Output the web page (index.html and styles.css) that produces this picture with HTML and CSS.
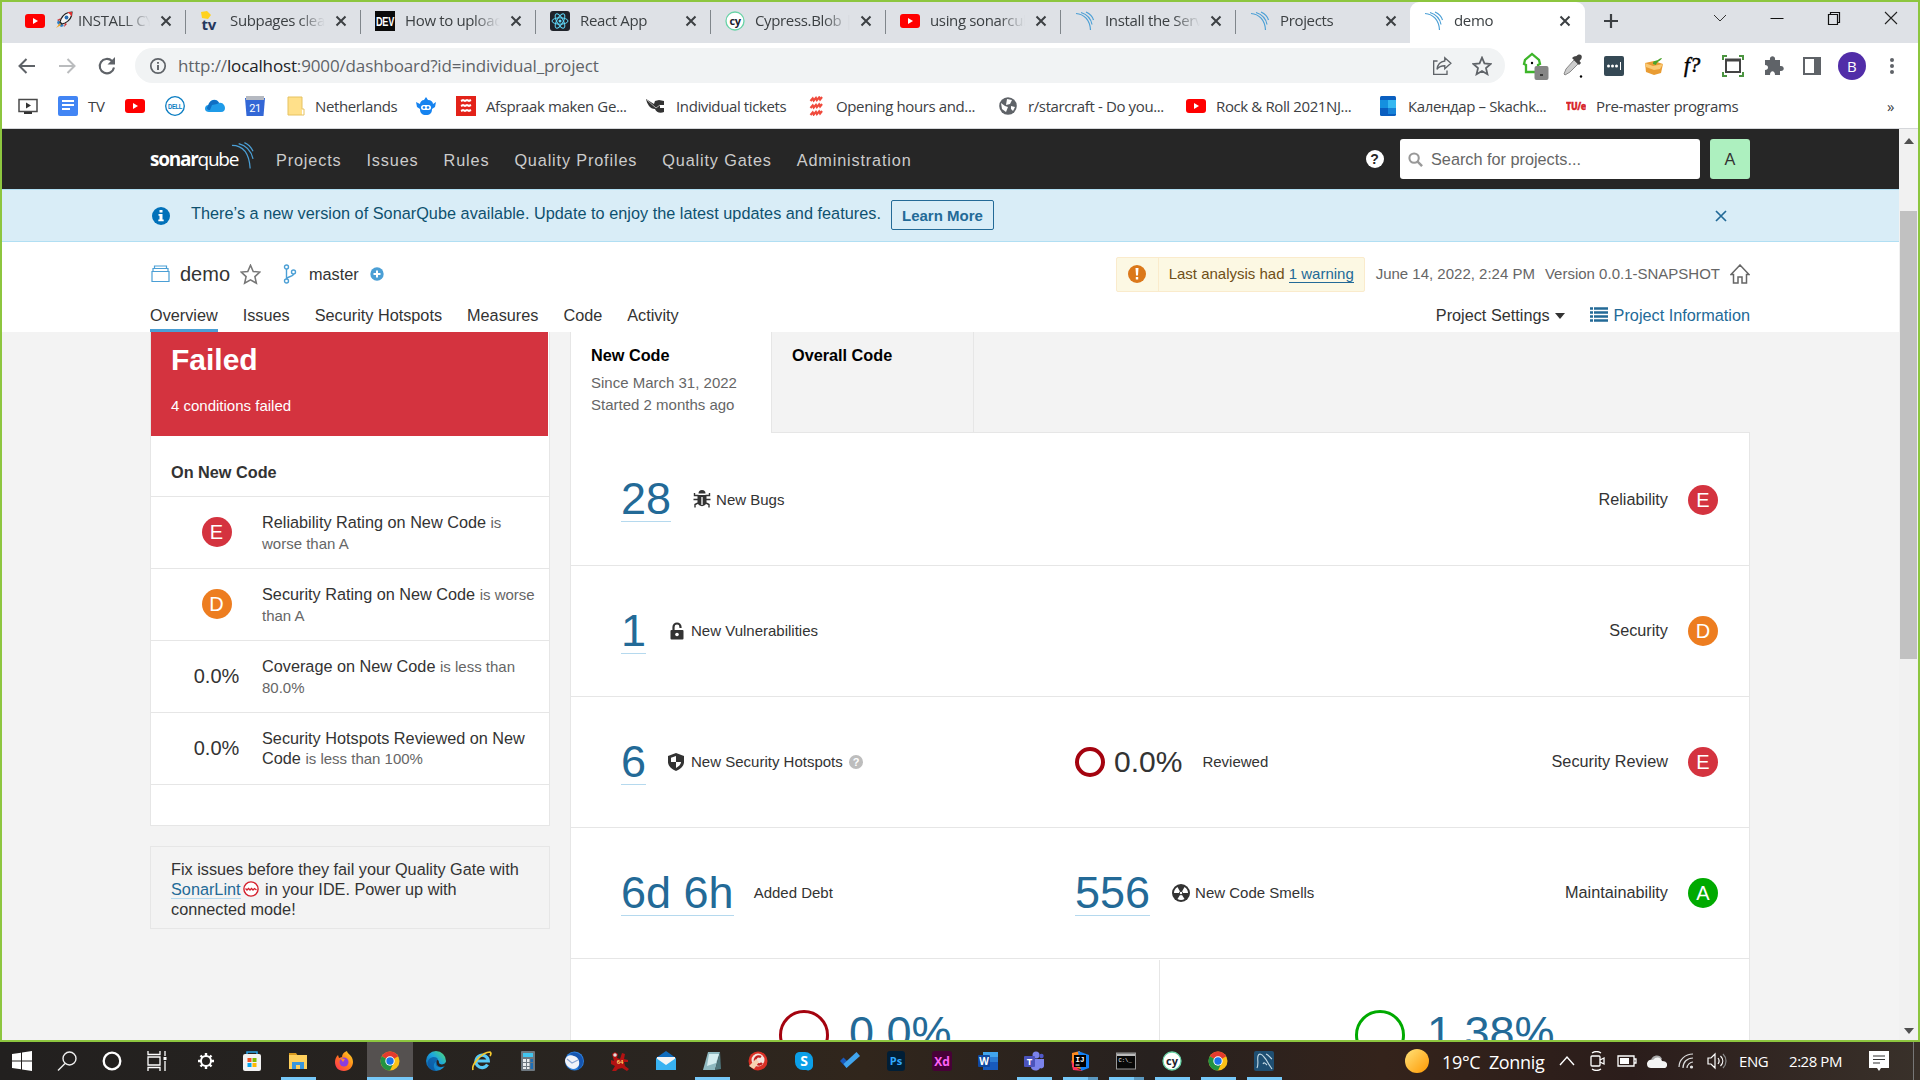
FILE: index.html
```html
<!DOCTYPE html>
<html lang="en">
<head>
<meta charset="utf-8">
<title>demo</title>
<link rel="stylesheet" href="styles.css">
</head>
<body>
<svg class="defs" width="0" height="0">
  <defs>
    <linearGradient id="gsun" x1="0" y1="0" x2="1" y2="1"><stop offset="0" stop-color="#ffe27a"/><stop offset="1" stop-color="#ff9800"/></linearGradient>
    <linearGradient id="gfire" x1="0" y1="1" x2="1" y2="0"><stop offset="0" stop-color="#ff2a5f"/><stop offset=".5" stop-color="#ff7a1a"/><stop offset="1" stop-color="#ffe226"/></linearGradient>
    <linearGradient id="gedge" x1="0" y1="1" x2="1" y2="0"><stop offset="0" stop-color="#0c59a4"/><stop offset=".55" stop-color="#1ba4e0"/><stop offset="1" stop-color="#55e06b"/></linearGradient>
    <symbol id="yt" viewBox="0 0 20 20"><rect y="3" width="20" height="14" rx="3" fill="#f00"/><path d="M8 7l5 3-5 3z" fill="#fff"/></symbol>
    <symbol id="arcs" viewBox="0 0 20 20"><path d="M1 2.500C9 3 15 9 15.500 19M6 1.500c6 2 10 6 11 12M11 1c4 1.800 6.500 4.500 7.500 8" fill="none" stroke="#4b9fd5" stroke-width="1.200"/></symbol>
    <symbol id="close" viewBox="0 0 20 20"><path d="M5.500 5.500l9 9m0-9l-9 9" stroke="#3c4043" stroke-width="2" fill="none"/></symbol>
    <symbol id="chrome" viewBox="0 0 20 20"><circle cx="10" cy="10" r="9.500" fill="#fbc116"/><path d="M10 10L1.770 5.250A9.500 9.500 0 0 1 18.230 5.250z" fill="#e33b2e"/><path d="M10 10L1.770 5.250A9.500 9.500 0 0 0 10 19.500L13.500 12z" fill="#229342"/><circle cx="10" cy="10" r="4.700" fill="#fff"/><circle cx="10" cy="10" r="3.700" fill="#1a73e8"/></symbol>
    <symbol id="cy" viewBox="0 0 20 20"><circle cx="10" cy="10" r="9" fill="#fff" stroke="#69d3a7" stroke-width="1.300"/><text x="10" y="13.500" text-anchor="middle" font-size="11" font-weight="700" fill="#1b1e2e" font-family="Open Sans">cy</text></symbol>
  </defs>
</svg>
<div class="screen">
<div class="browser">
  <div class="tabstrip">
    <div class="tab"><svg class="ic"><use href="#yt"/></svg><span class="title"><svg class="rocket" viewBox="0 0 18 18"><path d="M2 12l4 4 3-1-6-6z" fill="#2f80c8"/><path d="M6 8C8 4 12 1 17 1c0 5-3 9-7 11l-3 1-2-2z" fill="#f4f4f4" stroke="#222" stroke-width="1.200"/><path d="M12.500 1H17v4.500z" fill="#d33"/><circle cx="11.500" cy="6.500" r="1.900" fill="#276cb0"/><path d="M5 12l-4 5 5-3z" fill="#f6a21d"/><path d="M6 7L2 9l2 1zM10 12l-1 4 3-3z" fill="#c92f2f"/></svg>INSTALL CYP</span><svg class="ic x"><use href="#close"/></svg></div>
    <div class="tab"><svg class="ic" viewBox="0 0 20 20"><path d="M1 1l6-1 4 4-3 4-6-1z" fill="#ffd21f"/><text x="1.500" y="19" font-size="15" font-weight="700" fill="#24375d" font-family="Open Sans">tv</text></svg><span class="title">Subpages clean</span><svg class="ic x"><use href="#close"/></svg></div>
    <div class="tab"><svg class="ic" viewBox="0 0 20 20"><rect width="20" height="20" fill="#0a0a0a"/><text x="10" y="14.500" textLength="18" lengthAdjust="spacingAndGlyphs" text-anchor="middle" font-size="12" font-weight="700" fill="#fff" font-family="Liberation Sans">DEV</text></svg><span class="title">How to upload</span><svg class="ic x"><use href="#close"/></svg></div>
    <div class="tab"><svg class="ic" viewBox="0 0 20 20"><rect width="20" height="20" rx="3" fill="#20232a"/><g fill="none" stroke="#61dafb" stroke-width="1"><ellipse cx="10" cy="10" rx="8" ry="3.200"/><ellipse cx="10" cy="10" rx="8" ry="3.200" transform="rotate(60 10 10)"/><ellipse cx="10" cy="10" rx="8" ry="3.200" transform="rotate(120 10 10)"/></g><circle cx="10" cy="10" r="1.500" fill="#61dafb"/></svg><span class="title">React App</span><svg class="ic x"><use href="#close"/></svg></div>
    <div class="tab"><svg class="ic"><use href="#cy"/></svg><span class="title">Cypress.Blob |</span><svg class="ic x"><use href="#close"/></svg></div>
    <div class="tab"><svg class="ic"><use href="#yt"/></svg><span class="title">using sonarcube</span><svg class="ic x"><use href="#close"/></svg></div>
    <div class="tab"><svg class="ic"><use href="#arcs"/></svg><span class="title">Install the Serve</span><svg class="ic x"><use href="#close"/></svg></div>
    <div class="tab last"><svg class="ic"><use href="#arcs"/></svg><span class="title">Projects</span><svg class="ic x"><use href="#close"/></svg></div>
    <div class="tab active"><svg class="ic"><use href="#arcs"/></svg><span class="title">demo</span><svg class="ic x"><use href="#close"/></svg></div>
    <svg class="plus" viewBox="0 0 16 16"><path d="M8 1v14M1 8h14" stroke="#3c4043" stroke-width="2.200"/></svg>
    <div class="winctl">
      <svg viewBox="0 0 16 16"><path d="M2 5l6 6 6-6" fill="none" stroke="#333" stroke-width="1"/></svg>
      <svg viewBox="0 0 16 16"><path d="M1.500 8.500h13" stroke="#111"/></svg>
      <svg viewBox="0 0 16 16"><path d="M2.500 4.500h9v10h-9zM4.500 4.500v-2h9v10h-2" fill="none" stroke="#111" stroke-width="1.200"/></svg>
      <svg viewBox="0 0 16 16"><path d="M2 2l12 12M14 2L2 14" stroke="#222" stroke-width="1.100"/></svg>
    </div>
  </div>
  <div class="toolbar">
    <svg class="nv" viewBox="0 0 20 20"><path d="M18 10H3M9.500 3L2.500 10l7 7" fill="none" stroke="#5f6368" stroke-width="2"/></svg>
    <svg class="nv" viewBox="0 0 20 20"><path d="M2 10h15M10.500 3l7 7-7 7" fill="none" stroke="#babcbe" stroke-width="2"/></svg>
    <svg class="nv" viewBox="0 0 20 20"><path d="M17 11.500A7.200 7.200 0 1 1 15 5" fill="none" stroke="#5f6368" stroke-width="2.100"/><path d="M18 1v7.500h-7.500z" fill="#5f6368"/></svg>
    <div class="omnibox">
      <svg viewBox="0 0 18 18"><circle cx="9" cy="9" r="7.200" fill="none" stroke="#5f6368" stroke-width="1.700"/><path d="M9 8v5M9 5v1.800" stroke="#5f6368" stroke-width="1.900"/></svg>
      <span class="url">http://<b>localhost</b>:9000/dashboard?id=individual_project</span>
      <svg viewBox="0 0 18 18"><path d="M5 4.500H1.500v12h12V13" fill="none" stroke="#5f6368" stroke-width="1.200"/><path d="M11.500 1.500l5.500 5-5.500 5V8.800C8 8.800 6 9.800 4.500 12 5 8 7.500 5 11.500 4.500z" fill="none" stroke="#5f6368" stroke-width="1.200"/></svg>
      <svg viewBox="0 0 18 18"><path d="M9 1.500l2.200 5.200 5.600.5-4.200 3.700 1.300 5.500L9 13.500l-4.900 2.900 1.300-5.500L1.200 7.200l5.600-.5z" fill="none" stroke="#5f6368" stroke-width="1.600"/></svg>
    </div>
    <div class="exts">
      <svg viewBox="0 0 28 28"><path d="M3 12l1-4 7-6 7 6 1 4-2 1v7H5v-7z" fill="#fff" stroke="#3db52a" stroke-width="2.300"/><circle cx="11" cy="11" r="1.200"/><rect x="13.500" y="14" width="14" height="14" rx="2" fill="#858585"/><path d="M19 23h3" stroke="#222" stroke-width="1.500"/></svg>
      <svg viewBox="0 0 28 28"><path d="M3 22l2-5 8-9 4 4-8 8-5 3z" fill="#ccc" stroke="#888"/><path d="M11 6l7 7 2-2-1.500-2c5-4 1-9-3-5L13 4.500z" fill="#444"/><circle cx="20" cy="24.500" r="1.200"/></svg>
      <svg viewBox="0 0 28 28"><rect x="4" y="4" width="20" height="20" rx="2" fill="#354955"/><g fill="#fff"><circle cx="8.500" cy="14" r="1.500"/><circle cx="12.500" cy="14" r="1.500"/><circle cx="16.500" cy="14" r="1.500"/><path d="M20 10h1v8h-1z"/></g></svg>
      <svg viewBox="0 0 28 28"><path d="M5 11l9-2 9 3-2 9-7 2-8-3z" fill="#e99c33"/><path d="M5 11l8 3 10-2-3 5-6 1-8-3z" fill="#fac974"/><path d="M13 12c0-4 3-3 5-4 1-1 2-2 4-2-1 3-5 3-6 7z" fill="#4ba42c"/></svg>
      <svg viewBox="0 0 28 28"><text x="5" y="20" font-size="21" font-style="italic" font-family="Liberation Serif" stroke="#000" stroke-width=".5">f?</text></svg>
      <svg viewBox="0 0 28 28"><rect x="7" y="8" width="14" height="12" fill="none" stroke="#444" stroke-width="2"/><path d="M6 8h16" stroke="#444" stroke-width="3"/><path d="M4 8V4h4M20 4h4v4M24 20v4h-4M8 24H4v-4" fill="none" stroke="#4b9440" stroke-width="2"/></svg>
      <svg viewBox="0 0 28 28"><path d="M6 8h5c-1-5 6-5 5 0h5v6c5-1 5 6 0 5v4h-5c0-5-5-5-5 0H6v-5c4 0 4-5 0-5z" fill="#5f6368"/></svg>
      <svg viewBox="0 0 28 28"><rect x="6" y="6" width="16" height="16" fill="none" stroke="#5f6368" stroke-width="2"/><path d="M16 5h7v18h-7z" fill="#5f6368"/></svg>
      <span class="me">B</span>
      <svg viewBox="0 0 28 28" fill="#5f6368"><circle cx="14" cy="8" r="2"/><circle cx="14" cy="14" r="2"/><circle cx="14" cy="20" r="2"/></svg>
    </div>
  </div>
  <div class="bookmarks">
    <a><svg class="ic" viewBox="0 0 20 20"><path d="M1 3.500h18v12H1z" fill="#fff" stroke="#4a4a4a" stroke-width="1.500"/><path d="M8 6.500l5 3-5 3zM6 16h8v2H6z" fill="#333"/></svg></a>
    <a><svg class="ic" viewBox="0 0 20 20"><rect width="20" height="20" rx="2" fill="#4285f4"/><path d="M4 5h12M4 9h12M4 13h8" stroke="#fff" stroke-width="2"/></svg>TV</a>
    <a><svg class="ic"><use href="#yt"/></svg></a>
    <a><svg class="ic" viewBox="0 0 20 20"><circle cx="10" cy="10" r="9.300" fill="#fff" stroke="#0a7dc2" stroke-width="1.300"/><text x="10" y="12.500" textLength="14" lengthAdjust="spacingAndGlyphs" text-anchor="middle" font-size="6.500" font-weight="700" fill="#0a7dc2" font-family="Liberation Sans">DELL</text></svg></a>
    <a><svg class="ic" viewBox="0 0 20 20"><path d="M0 13c0-4 3-4 4-4 1-6 8-7 10-2 4-1 6 3 6 5s-1 4-4 4H4c-2 0-4-1-4-3z" fill="#1f9be8"/><path d="M3 10c1-7 9-8 11-3l-2 1-5 1-2 5c-3 0-4-2-2-4z" fill="#0f6fc4"/></svg></a>
    <a><svg class="ic" viewBox="0 0 20 20"><path d="M0 2h20l-1.500 18h-17z" fill="#3367d6"/><path d="M1 0h18v4H1z" fill="#b5b9c1"/><text x="10" y="15.500" text-anchor="middle" font-size="11" fill="#fff" font-family="Roboto">21</text></svg></a>
    <a><svg class="ic" viewBox="0 0 20 20"><path d="M3 1h14v18H3z" fill="#ffe08a"/><path d="M3 1h14v12h2v6H3z" fill="none" stroke="#e6c260"/></svg>Netherlands</a>
    <a><svg class="ic" viewBox="0 0 20 20"><path d="M10 1l2 3c3 0 5 2 5 4l3-2-1 5-3 2c0 4-2 6-6 6s-6-2-6-6l-3-2-1-5 4 2c0-2 2-4 4-4z" fill="#1683f0"/><rect x="5" y="9" width="10" height="5" rx="2.500" fill="#fff"/><circle cx="8" cy="11.500" r="1.300" fill="#1683f0"/><circle cx="12" cy="11.500" r="1.300" fill="#1683f0"/></svg></a>
    <a><svg class="ic" viewBox="0 0 20 20"><rect width="20" height="20" fill="#e32219"/><path d="M5 5l2-1 2 1 2-1 2 1 2-1M5 10l2-1 2 1 2-1 2 1 2-1M5 15l2-1 2 1 2-1 2 1 2-1" stroke="#fff" stroke-width="2" fill="none"/></svg>Afspraak maken Ge...</a>
    <a><svg class="ic" viewBox="0 0 20 20"><path d="M0 3l8 5 1-3 4-1 5 1v4h-4v3h4v4c-4 2-8 0-9-3-5 0-8-5-9-10z" fill="#333"/><path d="M1 4l9 8 4-3" stroke="#aaa" fill="none"/></svg>Individual tickets</a>
    <a><svg class="ic" viewBox="0 0 20 20"><path d="M4.500 5l2.200-2.500 1 2 2.200-2.500 1 2 2.200-2.500 1 2 1.900-2.500M4.500 12l2.200-2.500 1 2 2.200-2.500 1 2 2.200-2.500 1 2 1.900-2.500M4.500 19l2.200-2.500 1 2 2.200-2.500 1 2 2.200-2.500 1 2 1.900-2.500" fill="none" stroke="#f04a3c" stroke-width="2.200"/></svg>Opening hours and...</a>
    <a><svg class="ic" viewBox="0 0 20 20"><circle cx="10" cy="10" r="8.800" fill="#5f6368"/><path d="M3 7l4 3 3 1-2 5-4-3zM9 3l5 1-2 4-4 1zM13 10l4 1-2 4-2-2z" fill="#fff"/></svg>r/starcraft - Do you...</a>
    <a><svg class="ic"><use href="#yt"/></svg>Rock &amp; Roll 2021NJ...</a>
    <a><svg class="ic" viewBox="0 0 20 20"><rect x="2" y="0" width="16" height="20" rx="1.500" fill="#0a5fc0"/><path d="M2 4h8v8H2z" fill="#1490df"/><path d="M10 4h8v8h-8z" fill="#35b8f1"/><path d="M10 12h8v6h-8z" fill="#1683d8"/></svg>Календар – Skachk...</a>
    <a><svg class="ic" viewBox="0 0 20 20"><text x="0" y="13.500" textLength="20" lengthAdjust="spacingAndGlyphs" font-size="10" font-weight="800" fill="#d8262c" stroke="#d8262c" stroke-width=".3" font-family="Open Sans">TU/e</text></svg>Pre-master programs</a>
    <a class="more">»</a>
  </div>

  <div class="viewport">
    <div class="page">
      <nav class="navbar">
        <div class="logo"><b>sonar</b>qube<svg viewBox="0 0 24 28"><path d="M1 3c12 0 18 9 19 24M8 1c8 2 13 7 15 16M14 0c5 2 7 5 9 9" fill="none" stroke="#4b9fd5" stroke-width="1.300"/></svg></div>
        <a>Projects</a><a>Issues</a><a>Rules</a><a>Quality Profiles</a><a>Quality Gates</a><a>Administration</a>
        <svg class="help" viewBox="0 0 18 18"><circle cx="9" cy="9" r="9" fill="#fff"/><text x="9" y="14" text-anchor="middle" font-size="14" font-weight="700" fill="#262626" font-family="Liberation Sans">?</text></svg>
        <div class="search"><svg viewBox="0 0 16 16"><circle cx="6.500" cy="6.500" r="5" fill="none" stroke="#999" stroke-width="2.200"/><path d="M10 10l5 5" stroke="#999" stroke-width="2.600"/></svg>Search for projects...</div>
        <div class="avatar">A</div>
      </nav>
      <div class="notice">
        <svg class="info" viewBox="0 0 18 18"><circle cx="9" cy="9" r="9" fill="#0271b9"/><path d="M7.500 3h3v2.500h-3zM6.500 7h4v5.500h1.200v1.700H6.300v-1.700h1.200V8.700h-1z" fill="#fff"/></svg>
        <span>There’s a new version of SonarQube available. Update to enjoy the latest updates and features.</span>
        <button>Learn More</button>
        <svg class="dismiss" viewBox="0 0 12 12"><path d="M1 1l10 10M11 1L1 11" stroke="#236a97" stroke-width="1.700"/></svg>
      </div>
      <header class="context">
        <div class="crumbs">
          <svg class="proj" viewBox="0 0 19 18"><path d="M1 6.500h17v10H1zM2 6V3.500h15V6M3.500 3.500V1h12v2.500" fill="none" stroke="#4b9fd5" stroke-width="1.200"/></svg>
          <span class="pname">demo</span>
          <svg class="star" viewBox="0 0 20 20"><path d="M10 1.200l2.600 5.900 6.300.6-4.700 4.300 1.400 6.300L10 15.100l-5.600 3.200 1.400-6.300L1.100 7.700l6.300-.6z" fill="none" stroke="#777" stroke-width="1.500"/></svg>
          <svg class="branch" viewBox="0 0 14 20"><g fill="none" stroke="#4b9fd5" stroke-width="1.400"><circle cx="3.500" cy="3" r="2"/><circle cx="3.500" cy="17" r="2"/><circle cx="10.500" cy="8" r="2"/><path d="M3.500 5v10M10.500 10c0 3-6 2-7 5"/></g></svg>
          <span class="bname">master</span>
          <svg class="add" viewBox="0 0 14 14"><circle cx="7" cy="7" r="6.700" fill="#4b9fd5"/><path d="M7 3.500v7M3.500 7h7" stroke="#fff" stroke-width="2"/></svg>
          <div class="warn"><i><svg viewBox="0 0 18 18"><circle cx="9" cy="9" r="9" fill="#db781a"/><path d="M7.500 3h3l-.5 7.500H8zM7.800 12h2.400v2.500H7.800z" fill="#fff"/></svg></i><span>Last analysis had <u>1 warning</u></span></div>
          <span class="meta">June 14, 2022, 2:24 PM</span><span class="meta ver">Version 0.0.1-SNAPSHOT</span>
          <svg class="home" viewBox="0 0 20 20"><path d="M1 10.500L10 1l9 9.500h-2.500V19H12v-6H8v6H3.500v-8.500z" fill="none" stroke="#666" stroke-width="1.500"/></svg>
        </div>
        <div class="menu">
          <a class="on">Overview</a><a>Issues</a><a>Security Hotspots</a><a>Measures</a><a>Code</a><a>Activity</a>
          <a class="settings">Project Settings<svg viewBox="0 0 10 6"><path d="M0 0h10L5 6z" fill="#333"/></svg></a>
          <a class="pinfo"><svg viewBox="0 0 18 15"><path d="M0 1.500h3M4 1.500h14M0 5.500h3M4 5.500h14M0 9.500h3M4 9.500h14M0 13.500h3M4 13.500h14" stroke="#236a97" stroke-width="2.600"/></svg>Project Information</a>
        </div>
      </header>
      <main class="body">
        <aside>
          <section class="gate">
            <div class="failed"><h2>Failed</h2><p>4 conditions failed</p></div>
            <h3>On New Code</h3>
            <div class="cond"><span class="val"><i class="rating e">E</i></span><p>Reliability Rating on New Code <small>is worse than A</small></p></div>
            <div class="cond"><span class="val"><i class="rating d">D</i></span><p>Security Rating on New Code <small>is worse than A</small></p></div>
            <div class="cond"><span class="val">0.0%</span><p>Coverage on New Code <small>is less than 80.0%</small></p></div>
            <div class="cond"><span class="val">0.0%</span><p>Security Hotspots Reviewed on New Code <small>is less than 100%</small></p></div>
            <div class="rest"></div>
          </section>
          <section class="hint">Fix issues before they fail your Quality Gate with <a>SonarLint</a><svg viewBox="0 0 16 16"><circle cx="8" cy="8" r="7.100" fill="#fff" stroke="#d4202c" stroke-width="1.400"/><path d="M2.500 7.500l1.500 1.500 1.500-1.500L7 9l1.500-1.500L10 9l1.500-1.500L13.500 9" fill="none" stroke="#d4202c" stroke-width="1.300"/></svg> in your IDE. Power up with connected mode!</section>
        </aside>
        <section class="measures">
          <div class="ctabs">
            <div class="ctab sel"><b>New Code</b><p>Since March 31, 2022<br>Started 2 months ago</p></div>
            <div class="ctab"><b>Overall Code</b></div>
            <div class="fill"></div>
          </div>
          <div class="panel">
            <div class="row">
              <div class="m"><a class="num">28</a><svg class="gl bug" viewBox="0 0 18 18"><path d="M5.500 3.500a3.500 3.500 0 0 1 7 0z" fill="#333"/><path d="M4.500 5h9v7c0 5.500-9 5.500-9 0z" fill="#333"/><path d="M.5 9.500h5M12.500 9.500h5M1.500 3v2.500h4M16.500 3v2.500h-4M2 17.500v-3l3-1.500M16 17.500v-3l-3-1.500" fill="none" stroke="#333" stroke-width="1.400"/><path d="M9 7v8" stroke="#fff" stroke-width="1.300"/></svg><span>New Bugs</span></div>
              <div class="r">Reliability<i class="rating e">E</i></div>
            </div>
            <div class="row">
              <div class="m"><a class="num">1</a><svg class="gl lock" viewBox="0 0 14 18"><path d="M3.500 8V5a3.500 3.500 0 0 1 7 0v1" fill="none" stroke="#333" stroke-width="2.200"/><rect x=".5" y="8" width="13" height="9.500" rx="1" fill="#333"/><circle cx="7" cy="12.500" r="1.800" fill="#fff"/></svg><span>New Vulnerabilities</span></div>
              <div class="r">Security<i class="rating d">D</i></div>
            </div>
            <div class="row">
              <div class="m"><a class="num">6</a><svg class="gl shield" viewBox="0 0 16 18"><path d="M8 0l8 3v6c0 4-4 7.500-8 9-4-1.500-8-5-8-9V3z" fill="#333"/><path d="M8 3v6H3V4.700zM8 9h5c0 2.500-2.500 4.500-5 6z" fill="#fff"/></svg><span>New Security Hotspots</span><svg class="q" viewBox="0 0 14 14"><circle cx="7" cy="7" r="7" fill="#bdbdbd"/><text x="7" y="11" text-anchor="middle" font-size="11" font-weight="700" fill="#fff" font-family="Liberation Sans">?</text></svg></div>
              <div class="m"><i class="ring"></i><span class="pct">0.0%</span><span class="rev">Reviewed</span></div>
              <div class="r">Security Review<i class="rating e">E</i></div>
            </div>
            <div class="row">
              <div class="m"><a class="num">6d 6h</a><span class="debt">Added Debt</span></div>
              <div class="m"><a class="num">556</a><svg class="gl smell" viewBox="0 0 18 18"><circle cx="9" cy="9" r="9" fill="#333"/><path d="M8 7.500L5.500 3C3 4.500 2 6.500 2 9h5c0-.7.400-1.200 1-1.500zM10 7.500L12.500 3C15 4.500 16 6.500 16 9h-5c0-.7-.4-1.200-1-1.500zM8 11l-2.500 4c2 1.300 5 1.300 7 0L10 11c-.6.400-1.400.4-2 0z" fill="#fff"/><circle cx="9" cy="9" r="1.200" fill="#fff"/></svg><span>New Code Smells</span></div>
              <div class="r">Maintainability<i class="rating a">A</i></div>
            </div>
            <div class="halves">
              <div class="half"><i class="ring big"></i><span class="big">0.0%</span></div>
              <div class="half dup"><i class="ring big ok"></i><span class="big">1.38%</span></div>
            </div>
          </div>
        </section>
      </main>
    </div>
    <div class="scroll"><svg viewBox="0 0 10 6"><path d="M0 6h10L5 0z" fill="#505050"/></svg><i></i><svg viewBox="0 0 10 6"><path d="M0 0h10L5 6z" fill="#505050"/></svg></div>
  </div>
</div>

<footer class="taskbar">
  <div class="apps sys">
    <span><svg viewBox="0 0 20 20" fill="#fff"><path d="M0 3l9-1.300V9.500H0zM10 1.500L20 0v9.500H10zM0 10.500h9v7.800L0 17zM10 10.500h10V20l-10-1.500z"/></svg></span>
    <span><svg viewBox="0 0 20 20"><circle cx="12.500" cy="7.500" r="6.500" fill="none" stroke="#eee" stroke-width="1.400"/><path d="M8 12.500L1 19.500" stroke="#eee" stroke-width="1.400"/></svg></span>
    <span><svg viewBox="0 0 20 20"><circle cx="10" cy="10" r="8.300" fill="none" stroke="#fff" stroke-width="2.300"/></svg></span>
    <span><svg viewBox="0 0 20 20" fill="none" stroke="#fff" stroke-width="1.300"><path d="M1 6h12v8H1zM1 0v3.500h12V0M1 20v-3.500h12V20M18 0v5M18 10v10"/><path d="M16.500 6h3v3h-3z" fill="#fff" stroke="none"/></svg></span>
  </div>
  <div class="apps">
    <span><svg viewBox="0 0 20 20"><circle cx="10" cy="10" r="5" fill="none" stroke="#fff" stroke-width="2"/><path d="M10 2v3M10 15v3M2 10h3M15 10h3M4.500 4.500l2 2M13.500 13.500l2 2M15.500 4.500l-2 2M6.500 13.500l-2 2" stroke="#fff" stroke-width="2.400"/></svg></span>
    <span><svg viewBox="0 0 20 20"><path d="M5 5V1h10v4" fill="none" stroke="#2aa4e8" stroke-width="1.500"/><rect x="1" y="3" width="18" height="17" rx="2" fill="#f2f2f2"/><path d="M5.500 7h4v4h-4z" fill="#f25022"/><path d="M10.500 7h4v4h-4z" fill="#7fba00"/><path d="M5.500 12h4v4h-4z" fill="#00a4ef"/><path d="M10.500 12h4v4h-4z" fill="#ffb900"/></svg></span>
    <span class="run"><svg viewBox="0 0 20 20"><path d="M1 2h7l2 3H1z" fill="#d99a1e"/><path d="M1 4h18v14H1z" fill="#ffd05c"/><path d="M4 18v-7h12v7h-4v-4H8v4z" fill="#3a96dd"/></svg></span>
    <span><svg viewBox="0 0 20 20"><path d="M10 20c-6 0-9-4-9-9 0-3 1-5 3-7l1 3 3-1c0-3 2-5 5-6 0 3 6 4 6 11 0 5-4 9-9 9z" fill="url(#gfire)"/><circle cx="10" cy="11" r="4.500" fill="#8a3de0"/><path d="M6 7l5 1-2 3z" fill="#ff8a2a"/></svg></span>
    <span class="run cur"><svg><use href="#chrome"/></svg></span>
    <span><svg viewBox="0 0 20 20"><circle cx="10" cy="10" r="10" fill="url(#gedge)"/><path d="M20 12c-2 3-9 3-9 0 0-1 1-1 1-3 0-3-7-5-10 1-2 5 3 10 8 10-3-3-3-7 0-9-2 5 5 7 9 4z" fill="#0b56a0" opacity=".75"/><path d="M11 9c3 0 1 3 3 4s5 0 6-2v4l-5 1c-4 0-5-4-4-7z" fill="#292320"/></svg></span>
    <span><svg viewBox="0 0 20 20"><path d="M15.500 13.500a6.200 6.200 0 1 1 .8-3.500H5" fill="none" stroke="#58c9f5" stroke-width="3.200"/><path d="M1 19C-1 14 10 1 18 1c2 1 0 4 0 4" fill="none" stroke="#f5c92e" stroke-width="1.700"/></svg></span>
    <span><svg viewBox="0 0 20 20"><rect x="3" width="14" height="20" rx="1" fill="#6e7880"/><path d="M5 2h10v4H5z" fill="#41c6f0"/><path d="M5 8h3v3H5zM9 8h2.500v3H9zM5 12h3v3H5zM9 12h2.500v3H9zM5 16h3v2H5zM9 16h2.500v2H9z" fill="#e8ecee"/><path d="M12.500 8H15v3h-2.500zM12.500 12H15v6h-2.500z" fill="#1d6fb8"/></svg></span>
    <span><svg viewBox="0 0 20 20"><circle cx="10.500" cy="10" r="9.500" fill="#2c7fdc"/><path d="M5 3c6-4 14 0 14 7 0 5-3 8-6 9 4-6 3-12-8-16z" fill="#1555b0"/><path d="M1 9c1-4 5-6 9-4 4 1 6 5 5 9-1 2-3 4-6 4-5-1-8-5-8-9z" fill="#f1f3f9"/><path d="M3 8l5 4 6-3" fill="none" stroke="#8aa7d4" stroke-width="1.200"/></svg></span>
    <span><svg viewBox="0 0 20 20"><path d="M2 3l3-2 3 2-1 4 3 1 2-6 3 1-1 5 4 1v2h-4l1 4 4 3-2 2-5-3-4 1-3 3-3-1 3-5-4-2V9l3 1z" fill="#b31212"/><circle cx="5" cy="4" r="1.800" fill="#ddd"/><text x="10" y="13" text-anchor="middle" font-size="6" font-weight="700" fill="#ffd36b" font-family="Liberation Sans">64</text></svg></span>
    <span><svg viewBox="0 0 20 20"><path d="M0 7l10-7 10 7v12H0z" fill="#0f6cbd"/><path d="M1 6h18v8H1z" fill="#f5f5f5"/><path d="M0 7l10 7 10-7v12H0z" fill="#38b2f2"/></svg></span>
    <span class="run"><svg viewBox="0 0 20 20"><path d="M6 1h12l-5 18H1z" fill="#8fb9c0"/><path d="M7 3h10l-3 9-9 3z" fill="#d6eef0"/><path d="M18 1l1 17-6 1z" fill="#50777d"/></svg></span>
    <span><svg viewBox="0 0 20 20"><circle cx="10" cy="10" r="9.500" fill="#d93025"/><circle cx="10" cy="9" r="6.500" fill="#f3e4dc"/><path d="M13 6a4 4 0 1 0 1 6" stroke="#c01f1f" stroke-width="2.500" fill="none"/><path d="M1 15l7-7 3 3-5 7z" fill="#f7d3b0"/></svg></span>
    <span><svg viewBox="0 0 20 20"><path d="M5 1h6a8 8 0 0 1 8 8v5a5 5 0 0 1-7 5H9a8 8 0 0 1-8-8V5a5 5 0 0 1 4-4z" fill="#0b9fe8"/><text x="10" y="15" text-anchor="middle" font-size="14" font-weight="700" fill="#fff" font-family="Open Sans">S</text></svg></span>
    <span><svg viewBox="0 0 20 20"><path d="M0 10l3.500-3.500L10 13l-3.500 4z" fill="#185abd"/><path d="M6.500 17L20 5l-3.500-4L3.500 13z" fill="#41a5ee"/></svg></span>
    <span><svg viewBox="0 0 20 20"><rect x="1" width="18" height="20" rx="3" fill="#001e36"/><text x="10" y="14" text-anchor="middle" font-size="11" font-weight="700" fill="#31a8ff" font-family="Open Sans">Ps</text></svg></span>
    <span><svg viewBox="0 0 20 20"><rect width="20" height="20" rx="3" fill="#470137"/><text x="10" y="14.500" text-anchor="middle" font-size="12" font-weight="700" fill="#ff61f6" font-family="Open Sans">Xd</text></svg></span>
    <span><svg viewBox="0 0 20 20"><path d="M5 1h15v18H5z" fill="#185abd"/><path d="M5 1h15v5H5z" fill="#41a5ee"/><path d="M5 6h15v5H5z" fill="#2b7cd3"/><rect y="4" width="12" height="12" rx="1" fill="#1048a0"/><text x="6" y="13.500" text-anchor="middle" font-size="10" font-weight="700" fill="#fff" font-family="Open Sans">W</text></svg></span>
    <span class="run"><svg viewBox="0 0 20 20"><circle cx="12" cy="4" r="3.500" fill="#7b83eb"/><circle cx="17.500" cy="5" r="2.200" fill="#5059c9"/><path d="M7 8h13v7c0 2-3 3-4 2-2 4-9 3-9-1z" fill="#7b83eb"/><rect y="5" width="11" height="11" rx="1" fill="#4b53bc"/><text x="5.500" y="14" text-anchor="middle" font-size="9.500" font-weight="700" fill="#fff" font-family="Open Sans">T</text></svg></span>
    <span class="run multi"><svg viewBox="0 0 20 20"><path d="M2 2l8-2 1 18-9-2z" fill="#ff8a1e"/><path d="M8 0l11 4v13l-8 3z" fill="#1482f5"/><path d="M1 9l7 9 5 2-10-1z" fill="#fe315d"/><rect x="4" y="4" width="12" height="12" fill="#000"/><text x="5.500" y="11" font-size="7.500" font-weight="700" fill="#fff" font-family="Liberation Mono">IJ</text><path d="M5.500 14h4" stroke="#fff"/></svg></span>
    <span class="run multi"><svg viewBox="0 0 20 20"><rect x=".5" y="2" width="19" height="16" fill="#080808" stroke="#999"/><path d="M1 2.500h18V5H1z" fill="#bbb"/><text x="2.500" y="11" font-size="5.500" fill="#fff" font-family="Liberation Mono">C:\_</text></svg></span>
    <span class="run"><svg><use href="#cy"/></svg></span>
    <span class="run"><svg><use href="#chrome"/></svg></span>
    <span class="run"><svg viewBox="0 0 20 20"><rect width="20" height="20" rx="2" fill="#1f4f72"/><path d="M3 17c2-5 0-8 1-12 1-3 4-2 6 1 3 3 4 7 6 9l2 3M9 13c1-2 2-1 4 1M12 3c3 1 4 4 6 5" fill="none" stroke="#c6dbe6" stroke-width="1.100"/></svg></span>
  </div>
  <div class="tray">
    <svg class="sun" viewBox="0 0 24 24"><circle cx="12" cy="12" r="12" fill="url(#gsun)"/></svg>
    <span class="wx">19°C&nbsp; Zonnig</span>
    <svg viewBox="0 0 20 20"><path d="M3 14l7-8 7 8" fill="none" stroke="#fff" stroke-width="1.400"/></svg>
    <svg viewBox="0 0 20 20" fill="none" stroke="#fff" stroke-width="1.300"><rect x="4" y="5" width="9" height="10" rx="1"/><path d="M13 9l4-2v6l-4-2M5 2c3-2 6-2 9 0M5 18c3 2 6 2 9 0"/></svg>
    <svg viewBox="0 0 20 20"><path d="M1 5h16v10H1zM17 8h2v4h-2" fill="none" stroke="#fff" stroke-width="1.300"/><path d="M3 7h9v6H3z" fill="#fff"/></svg>
    <svg viewBox="0 0 20 20"><path d="M4 10c0-6 9-8 11-2l-7 4z" fill="#aaa"/><path d="M0 13c0-4 4-5 6-4 3-4 8-3 9 1 7 0 6 7 2 7H4c-2 0-4-1-4-4z" fill="#f4f4f4"/></svg>
    <svg viewBox="0 0 20 20" fill="none" stroke="#ddd" stroke-width="1.200"><path d="M2 16C2 9 8 3 16 3M6 17c0-6 4-10 10-10M10 17c0-3 3-6 6-6"/><circle cx="14.500" cy="16" r="1" fill="#fff"/></svg>
    <svg viewBox="0 0 20 20" fill="none" stroke="#fff" stroke-width="1.200"><path d="M1 7h3l4-4v14l-4-4H1zM11 7c1.500 2 1.500 4 0 6M13.500 5c3 3 3 7 0 10"/><path d="M16 3c4 4 4 10 0 14" stroke="#888"/></svg>
    <span class="lang">ENG</span>
    <span class="clock">2:28 PM</span>
    <svg class="notif" viewBox="0 0 20 20"><path d="M0 0h20v17h-8l-2 3-2-3H0z" fill="#fff"/><path d="M4 5h12M4 8.500h12M4 12h7" stroke="#333" stroke-width="1.200"/></svg>
    <i class="edge"></i>
  </div>
</footer>
</div>
</body>
</html>
```
FILE: styles.css
```css
* { box-sizing: border-box; }
body { margin: 0; font-family: "Liberation Sans", Arial, sans-serif; font-size: 16.25px; color: #333; }
h2, h3, p { margin: 0; }
svg { flex: none; display: block; }
i { font-style: normal; }
.defs { position: absolute; }
.screen { width: 1920px; height: 1080px; overflow: hidden; display: flex; flex-direction: column; }
.browser { height: 1042px; border: 2px solid #8dc63f; display: flex; flex-direction: column; overflow: hidden; background: #fff; }
.ic { width: 20px; height: 20px; }

/* Tab strip */
.tabstrip { height: 41px; flex: none; background: #dee1e6; display: flex; padding-left: 9px; font: 15px "Open Sans", sans-serif; letter-spacing: -.35px; color: #3c4043; }
.tab { width: 175px; height: 41px; display: flex; align-items: center; padding: 0 10px 3px 14px; background: linear-gradient(#80868b, #80868b) no-repeat right 8px / 1px 24px; }
.tab .title { margin: -2px 0 0 10px; width: 95px; overflow: hidden; white-space: nowrap; display: flex; align-items: center; -webkit-mask-image: linear-gradient(90deg, #000 72%, transparent); mask-image: linear-gradient(90deg, #000 72%, transparent); }
.tab .x { margin-left: auto; }
.tab.last { background: none; width: 174px; padding-right: 9px; }
.tab.active { background: #fff; border-radius: 9px 9px 0 0; width: 175px; }
.rocket { width: 18px; height: 20px; margin-right: 5px; }
.plus { width: 16px; height: 16px; margin: 11px 0 0 18px; }
.winctl { margin-left: auto; display: flex; gap: 41px; padding: 8px 19px 0 0; }
.winctl svg { width: 16px; height: 16px; }

/* Toolbar */
.toolbar { height: 45px; flex: none; display: flex; align-items: center; padding: 0 0 0 15px; }
.nv { width: 20px; height: 20px; margin-right: 20px; }
.omnibox { width: 1370px; height: 35px; border-radius: 18px; background: #f1f3f4; margin-left: -2px; display: flex; align-items: center; padding: 0 13px 0 14px; }
.omnibox svg { width: 18px; height: 18px; }
.omnibox svg:nth-of-type(n+2) { width: 20px; height: 20px; margin-left: 20px; }
.url { font: 17px "Open Sans", sans-serif; letter-spacing: -.14px; color: #5f6368; margin: 0 auto 0 11px; }
.url b { font-weight: 400; color: #202124; }
.exts { display: flex; align-items: center; gap: 12px; padding-left: 16px; }
.exts svg { width: 28px; height: 28px; margin-right: -.4px; }
.me { width: 28px; height: 28px; border-radius: 50%; background: #512da8; color: #fff; text-align: center; font: 15px/28px "Open Sans", sans-serif; }

/* Bookmarks */
.bookmarks { height: 41px; flex: none; border-bottom: 1px solid #d5d7da; display: grid; grid-template-columns: 40px 67px 40px 40px 40px 40px 131px 40px 190px 160px 192px 188px 192px 188px 321px 20px; padding: 0 0 5px 16px; font: 15px "Open Sans", sans-serif; letter-spacing: -.38px; color: #3c4043; }
.bookmarks a { display: flex; align-items: center; gap: 10px; white-space: nowrap; }

/* SonarQube page */
.viewport { flex: 1; min-height: 0; display: flex; overflow: hidden; }
.page { width: 1897px; background: #f3f3f3; overflow: hidden; height: 911px; }
.navbar { height: 60px; background: #262626; display: flex; align-items: center; padding-left: 148px; color: #ccc; letter-spacing: .85px; }
.navbar a { margin-right: 25px; line-height: 60px; padding-top: 1px; }
.logo { width: 126px; display: flex; color: #fff; font: 19px/60px "Open Sans", sans-serif; letter-spacing: -1.25px; height: 60px; }
.logo b { font-weight: 700; }
.logo svg { width: 23px; height: 28px; margin: 13px 0 0 -7px; }
.help { width: 18px; height: 18px; margin-left: auto; }
.search { width: 300px; height: 40px; margin: 0 10px 0 16px; background: #fff; border-radius: 3px; display: flex; align-items: center; padding: 1px 0 0 8px; gap: 8px; color: #666; letter-spacing: 0; }
.search svg { width: 15px; height: 15px; margin-top: -1px; }
.avatar { width: 40px; height: 40px; margin-right: 149px; border-radius: 3px; background: #adf0bf; color: #333; text-align: center; line-height: 41px; letter-spacing: 0; }
.notice { height: 53px; background: #d9edf7; border: solid #b1dff3; border-width: 1px 0; display: flex; align-items: center; padding: 0 172px 0 150px; color: #0e516f; }
.info { width: 18px; height: 18px; margin-right: 21px; }
.notice span { margin-top: -4px; letter-spacing: .02px; }
.notice button { margin: -1px 0 0 10px; width: 103px; height: 30px; border: 1px solid #236a97; background: transparent; color: #236a97; border-radius: 2px; font: bold 15px "Liberation Sans", sans-serif; padding: 0; }
.dismiss { width: 12px; height: 12px; margin-left: auto; }
.context { height: 90px; background: #fff; padding: 0 149px 0 148px; }
.crumbs { height: 62px; display: flex; align-items: center; padding-top: 2px; }
.proj { width: 19px; height: 18px; margin: 0 10px 0 1px; }
.pname { font-size: 20px; }
.star { width: 21px; height: 21px; margin-left: 10px; }
.branch { width: 14px; height: 20px; margin: 0 12px 0 22px; }
.bname { padding-top: 1px; }
.add { width: 14px; height: 14px; margin-left: 11px; }
.warn { margin-left: auto; width: 249px; height: 35px; background: #fcf8e3; border: 1px solid #faebcc; border-radius: 2px; display: flex; color: #6f4f17; font-size: 15px; align-items: center; }
.warn i { width: 42px; height: 33px; border-right: 1px solid #faebcc; display: flex; align-items: center; justify-content: center; }
.warn i svg { width: 18px; height: 18px; }
.warn span { margin: -1px 0 0 10px; }
.warn u { text-decoration: none; color: #236a97; border-bottom: 1px solid #236a97; }
.meta { font-size: 15px; color: #666; margin: -2px 0 0 11px; }
.meta.ver { margin-left: 10px; }
.home { width: 20px; height: 20px; margin-left: 10px; }
.menu { height: 28px; display: flex; gap: 25px; }
.menu a { height: 28px; line-height: 23px; }
.menu .on { border-bottom: 3px solid #4b9fd5; }
.settings { margin-left: auto; display: flex; }
.settings svg { width: 10px; height: 6px; margin: 9px 0 0 5px; }
.pinfo { display: flex; color: #236a97; }
.pinfo svg { width: 18px; height: 15px; margin: 3px 6px 0 0; }

.body { display: flex; gap: 20px; padding-left: 148px; }
aside { width: 400px; flex: none; }
.gate { height: 494px; background: #fff; border: 1px solid #e6e6e6; border-top: 0; }
.failed { height: 104px; background: #d4333f; color: #fff; padding: 11px 20px; margin-right: 1px; }
.failed h2 { font-size: 30px; line-height: 34px; }
.failed p { font-size: 15px; line-height: 18px; margin-top: 20px; }
.gate h3 { height: 61px; padding-left: 20px; font-size: 16.25px; line-height: 72px; border-bottom: 1px solid #e6e6e6; }
.cond { height: 72px; border-bottom: 1px solid #e6e6e6; display: flex; align-items: center; }
.val { box-sizing: content-box; padding-left: 40px; width: 51px; display: flex; justify-content: center; font-size: 20px; }
.cond p { margin-left: 20px; width: 280px; line-height: 20px; }
.cond small { font-size: 15px; color: #666; }
.rating { width: 30px; height: 30px; flex: none; border-radius: 50%; color: #fff; font: 20px/30px "Liberation Sans", sans-serif; text-align: center; }
.cond .rating { margin-top: -1px; }
.e { background: #d4333f; } .d { background: #ed7d20; } .a { background: #0a0; }
.hint { margin-top: 20px; height: 83px; border: 1px solid #e6e6e6; padding: 12px 24px 0 20px; line-height: 20px; }
.hint a { color: #236a97; border-bottom: 1px solid #b5d9ee; }
.hint svg { display: inline-block; width: 16px; height: 16px; vertical-align: -2px; margin: 0 2px 0 2px; }

.measures { width: 1180px; }
.ctabs { display: flex; height: 101px; }
.ctab { width: 202px; background: #f3f3f3; border: solid #e6e6e6; border-width: 0 1px 1px 0; padding: 13px 0 0 20px; color: #000; line-height: 20px; }
.ctab.sel { width: 202px; background: #fff; border-width: 0 1px; padding-left: 20px; }
.ctab p { font-size: 15px; line-height: 22px; color: #666; margin-top: 7px; }
.fill { flex: 1; border-bottom: 1px solid #e6e6e6; }
.panel { background: #fff; border: solid #e6e6e6; border-width: 0 1px; height: 640px; overflow: hidden; }
.row { height: 131px; border-bottom: 1px solid #e6e6e6; display: grid; grid-template-columns: 454px 380px 1fr; align-items: center; padding: 0 31px 1px 50px; font-size: 15px; }
.row:first-child { height: 133px; padding-top: 1px; }
.m { display: flex; align-items: center; }
.num { font-size: 45px; line-height: 52px; height: 54px; color: #236a97; border-bottom: 1px solid #b5d9ee; margin: -8px 0 0; padding-top: 5px; }
.gl { margin-left: 22px; margin-right: 5px; height: 18px; }
.bug { width: 18px; } .lock { width: 14px; margin-right: 7px; margin-left: 24px; } .shield { width: 16px; margin-right: 7px; } .smell { width: 18px; }
.q { width: 14px; height: 14px; margin-left: 6px; }
.ring { width: 30px; height: 30px; border: 4px solid #a4030f; border-radius: 50%; }
.pct { font-size: 30px; margin-left: 9px; } .rev { margin-left: 20px; } .debt { margin-left: 20px; }
.r { grid-column: 3; display: flex; justify-content: flex-end; align-items: center; gap: 20px; white-space: nowrap; font-size: 16.25px; }
.r .rating { margin-top: 1px; }
.halves { display: grid; grid-template-columns: 588px 1fr; padding-top: 1px; }
.half { height: 200px; display: flex; padding: 50px 0 0 208px; gap: 20px; }
.dup { border-left: 1px solid #e6e6e6; padding-left: 195px; gap: 22px; }
.half .ring { width: 50px; height: 50px; border-width: 3px; }
.ring.ok { border-color: #0a0; }
.half span { font-size: 45px; line-height: 50px; color: #236a97; margin-top: -2px; }

.scroll { width: 19px; background: #f1f1f1; display: flex; flex-direction: column; align-items: center; padding: 9px 0 6px; }
.scroll svg { width: 10px; height: 6px; }
.scroll i { width: 17px; height: 448px; background: #c1c1c1; margin: 67px 0 auto; }

/* Taskbar */
.taskbar { height: 38px; background: linear-gradient(90deg, #22201f, #2a2520 35%, #31261c 45%, #27211f 60%, #34231b 72%, #2b1d1b 85%, #39312a); display: flex; color: #fff; font-family: "Open Sans", sans-serif; }
.apps { display: flex; }
.apps span { width: 46px; display: flex; justify-content: center; align-items: center; background: linear-gradient(#76c8f8, #76c8f8) no-repeat center bottom / 0 3px; }
.sys span { width: 45px; }
.sys { width: 183px; }
.apps svg { width: 20px; height: 20px; }
.sys svg { margin-left: -2px; }
.apps .run { background-size: 35px 3px; }
.apps .cur { background-color: #555150; background-size: 46px 3px; }
.apps .multi { background-image: linear-gradient(90deg, #76c8f8 72%, #5b98bf 72%); }
.tray { margin-left: auto; display: flex; align-items: center; font-size: 15px; letter-spacing: -.45px; }
.tray svg { width: 20px; height: 20px; margin-right: 10px; }
.tray .sun { width: 24px; height: 24px; margin-right: 13px; }
.wx { font-size: 18px; width: 115px; white-space: nowrap; padding-top: 1px; letter-spacing: -.35px; }
.lang { width: 50px; margin-left: 2px; } .clock { width: 80px; white-space: nowrap; }
.tray .notif { margin-right: 24px; }
.edge { width: 1px; height: 38px; background: #777; margin-right: 6px; }
```
